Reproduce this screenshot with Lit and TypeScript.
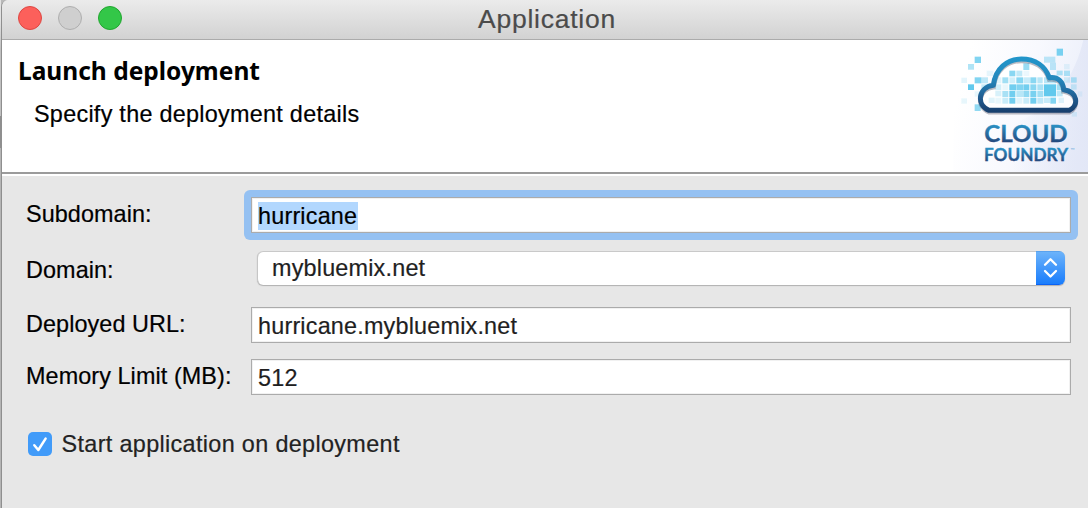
import { LitElement, html, svg, css } from "lit";
import { customElement, state } from "lit/decorators.js";

// Mosaic tiles of the logo: x, y, width, height, opacity
const TILES: number[][] = [
  [104, 62, 19, 19, 0.8], [84, 84, 18, 17, 0.5], [64, 125, 17, 16, 0.18], [104, 124, 20, 18, 0.8],
  [84, 145, 18, 17, 1], [124, 124, 20, 18, 0.4], [64, 187, 17, 16, 0.15], [104, 205, 18, 20, 0.7],
  [124, 145, 18, 17, 0.35], [140, 104, 20, 16, 0.15], [350, 38, 19, 21, 0.85], [312, 62, 34, 18, 0.4],
  [330, 80, 18, 22, 0.4], [372, 84, 17, 16, 0.15], [372, 104, 18, 16, 0.5], [393, 124, 17, 16, 0.5],
  [372, 124, 18, 16, 0.25], [393, 145, 17, 16, 0.3], [350, 104, 18, 14, 0.5], [413, 166, 14, 16, 0.12],
  [395, 228, 16, 14, 0.18], [104, 166, 16, 16, 0.15],
  [250, 82, 18, 20, 0.65], [208, 104, 18, 17, 0.75], [250, 104, 18, 16, 0.12], [229, 104, 18, 17, 0.4],
  [166, 124, 18, 18, 0.2], [187, 124, 18, 18, 0.6], [208, 124, 18, 18, 0.3], [229, 124, 20, 18, 0.75],
  [250, 124, 20, 18, 0.35], [271, 124, 18, 18, 0.75], [292, 124, 16, 18, 0.45], [312, 124, 36, 18, 0.45],
  [166, 145, 18, 18, 0.3], [187, 145, 18, 18, 0.15], [208, 145, 20, 18, 0.9], [229, 145, 20, 18, 0.8],
  [250, 145, 18, 18, 0.9], [271, 145, 18, 18, 0.75], [292, 145, 18, 18, 0.55], [312, 145, 36, 36, 1],
  [350, 145, 16, 18, 0.6], [166, 165, 18, 16, 0.25], [187, 165, 18, 18, 0.55], [208, 165, 18, 18, 0.9],
  [229, 165, 20, 18, 0.45], [250, 165, 18, 18, 0.7], [271, 165, 18, 18, 0.85], [292, 165, 18, 18, 0.6],
  [350, 165, 18, 16, 0.4], [146, 185, 18, 16, 0.2], [166, 185, 18, 18, 0.15], [187, 185, 18, 18, 0.35],
  [208, 185, 18, 18, 0.9], [229, 185, 18, 18, 0.2], [250, 185, 18, 18, 0.35], [271, 185, 18, 18, 0.9],
  [292, 185, 18, 18, 0.4], [312, 185, 18, 16, 0.35], [331, 185, 17, 18, 0.8], [356, 185, 16, 16, 0.2],
];

@customElement("cf-logo")
class CfLogo extends LitElement {
  static styles = css`
    :host { display: block; width: 148px; height: 132px; letter-spacing: 0; }
    .art { display: block; }
    .word { font-family: Lato, sans-serif; font-weight: 700; }
  `;
  render() {
    return html`<svg class="art" width="148" height="132" viewBox="0 12 444 396">
      <defs>
        <linearGradient id="bg" gradientUnits="userSpaceOnUse" x1="60" y1="150" x2="444" y2="250">
          <stop offset="0" stop-color="#fff"></stop>
          <stop offset="0.5" stop-color="#f8f9fe"></stop>
          <stop offset="1" stop-color="#eaeefa"></stop>
        </linearGradient>
        <linearGradient id="bg2" gradientUnits="userSpaceOnUse" x1="220" y1="0" x2="444" y2="0">
          <stop offset="0" stop-color="#dfe5f6" stop-opacity="0"></stop>
          <stop offset="1" stop-color="#dfe4f5"></stop>
        </linearGradient>
        <linearGradient id="edge" gradientUnits="userSpaceOnUse" x1="0" y1="60" x2="0" y2="232">
          <stop offset="0" stop-color="#2196cb"></stop>
          <stop offset="0.4" stop-color="#2488bd"></stop>
          <stop offset="0.72" stop-color="#215d91"></stop>
          <stop offset="1" stop-color="#173c6a"></stop>
        </linearGradient>
        <linearGradient id="w1" gradientUnits="userSpaceOnUse" x1="0" y1="268" x2="0" y2="320">
          <stop offset="0" stop-color="#2a8fc2"></stop>
          <stop offset="1" stop-color="#24477c"></stop>
        </linearGradient>
        <linearGradient id="w2" gradientUnits="userSpaceOnUse" x1="0" y1="338" x2="0" y2="376">
          <stop offset="0" stop-color="#2a8fc2"></stop>
          <stop offset="1" stop-color="#24477c"></stop>
        </linearGradient>
      </defs>
      <rect x="40" y="12" width="404" height="396" fill="url(#bg)"></rect>
      <path d="M444 12H430C418 62 400 110 360 165C320 215 260 250 200 270V408H444Z" fill="url(#bg2)" opacity="0.7"></path>
      <path d="M147 224C108 208 114 155 160 149C166 98 202 70 244 70C286 70 316 91 328 126C354 122 370 139 371 162C414 168 417 210 388 224Z" fill="#fff" opacity="0.85"></path>
      ${TILES.map(([x, y, w, h, o]) => svg`<rect x=${x} y=${y} width=${w} height=${h} fill="#62c9ed" opacity=${o}></rect>`)}
      <path d="M147 228C108 212 114 159 160 153C166 102 202 74 244 74C286 74 316 95 328 130C354 126 370 143 371 166C414 172 417 214 388 228Z" fill="none" stroke="#556" stroke-opacity="0.4" stroke-width="15"></path>
      <path d="M147 223C108 207 114 154 160 148C166 97 202 69 244 69C286 69 316 90 328 125C354 121 370 138 371 161C414 167 417 209 388 223Z" fill="none" stroke="url(#edge)" stroke-width="15" stroke-linejoin="round"></path>
      <text class="word" x="133" y="319" font-size="70" textLength="250" lengthAdjust="spacingAndGlyphs" fill="url(#w1)" stroke="url(#w1)" stroke-width="1">CLOUD</text>
      <text class="word" x="132" y="375" font-size="50" textLength="252" lengthAdjust="spacingAndGlyphs" fill="url(#w2)" stroke="url(#w2)" stroke-width="1">FOUNDRY</text>
      <text class="word" x="392" y="348" font-size="16" fill="#8dbce4">™</text>
    </svg>`;
  }
}

@customElement("app-root")
class AppRoot extends LitElement {
  @state() private started = true;

  static styles = css`
    * { box-sizing: border-box; }
    :host {
      display: flex; width: 1088px; height: 508px; overflow: hidden;
      background: #b9b9b9; color: #000;
      font: 23.4px/26px "Liberation Sans", Arial, sans-serif; letter-spacing: 0.19px;
      -webkit-text-stroke: 0.2px;
    }
    .strip { flex: none; width: 1px; background: linear-gradient(#e2e2e2 0 20px, #c0c0c0 50px 116px, #8f8f8f 116px 148px, #b5b5b5 148px); }
    .window {
      flex: 1; display: flex; flex-direction: column; overflow: hidden;
      border-left: 1px solid #8f8f8f; border-top-left-radius: 7px; background: #e7e7e7;
    }
    .bar {
      flex: none; height: 40px; display: grid; grid-template-columns: 1fr auto 1fr; align-items: center;
      padding: 0 0 3px 16px; background: linear-gradient(#ebebeb, #d2d2d2); border-bottom: 1px solid #ababab;
    }
    .lights { display: flex; gap: 16px; }
    .light { width: 24px; height: 24px; border-radius: 50%; border: 1px solid; }
    .close { background: #fc605b; border-color: #dd4742; }
    .min { background: #cfcfcf; border-color: #aeaeae; }
    .max { background: #33c748; border-color: #21a62f; }
    .title { font-size: 26.5px; letter-spacing: 0.75px; color: #4b4b4b; padding-right: 12px; padding-top: 1px; }
    .head { flex: none; height: 132px; display: flex; justify-content: space-between; background: #fff; }
    .texts { padding: 16px 0 0 16px; }
    .heading { margin: 0; font: 700 24.5px/30px "Noto Sans", sans-serif; letter-spacing: 0; -webkit-text-stroke: 0; }
    .sub { margin: 15px 0 0 16px; letter-spacing: 0.27px; }
    .rule { flex: none; height: 4px; background: #fff; border-top: 2px solid #9b9b9b; }
    .form { padding-top: 14px; }
    .row { display: flex; align-items: center; padding-left: 24px; }
    .label { width: 225px; letter-spacing: 0.08px; }
    .up { padding-bottom: 2px; }
    .down { padding-top: 4px; }
    .first { height: 50px; }
    .first .label { width: 218px; }
    .second { height: 34px; margin-top: 11px; }
    .second .label { width: 231px; }
    .third { height: 36px; margin-top: 22px; }
    .fourth { height: 36px; margin-top: 16px; }
    .field {
      width: 820px; height: 36px; border: 1px solid #ababab; background: #fff;
      box-shadow: inset 0 0 0 1px #f1f1f1; padding: 5px 0 0 6px; color: #1f1f1f;
    }
    .ring { background: #95c1f2; border-radius: 6px; padding: 7px; }
    .sel { display: block; width: 100px; height: 28px; line-height: 28px; background: #b2d7fe; color: #000; margin-top: -1px; }
    .select {
      width: 808px; height: 34px; border-radius: 6px; background: #fff; color: #1f1f1f; overflow: hidden;
      display: flex; justify-content: space-between; padding-left: 14px; line-height: 34px;
      border-left: 1px solid #c6c6c6; box-shadow: 0 1px 1px #b0b0b0, inset 0 1px #c9c9c9;
    }
    .step { width: 29px; height: 34px; background: linear-gradient(#6cb3fa, #1a7dfc); border-top: 1px solid #59a2ee; border-bottom: 1px solid #0b62f5; }
    .arrows { display: block; }
    .check { display: flex; align-items: center; height: 24px; margin-top: 37px; padding-left: 26px; color: #222; letter-spacing: 0.34px; }
    .box { display: flex; width: 24px; height: 24px; border-radius: 5px; background: #419bf9; margin-right: 9.5px; }
  `;

  render() {
    return html`
      <div class="strip"></div>
      <main class="window">
        <header class="bar">
          <div class="lights"><i class="light close"></i><i class="light min"></i><i class="light max"></i></div>
          <div class="title">Application</div>
        </header>
        <section class="head">
          <div class="texts">
            <h1 class="heading">Launch deployment</h1>
            <p class="sub">Specify the deployment details</p>
          </div>
          <cf-logo></cf-logo>
        </section>
        <div class="rule"></div>
        <section class="form">
          <div class="row first"><div class="label up">Subdomain:</div>
            <div class="ring"><div class="field"><span class="sel">hurricane</span></div></div></div>
          <div class="row second"><div class="label down">Domain:</div>
            <div class="select"><span>mybluemix.net</span>
              <span class="step"><svg class="arrows" width="29" height="32" viewBox="0 0 29 32" fill="none" stroke="#fff" stroke-width="2.3" stroke-linecap="round" stroke-linejoin="round"><path d="M9 12.8L14.5 7.3L20 12.8M9 19L14.5 24.5L20 19"></path></svg></span>
            </div></div>
          <div class="row third"><div class="label up">Deployed URL:</div><div class="field">hurricane.mybluemix.net</div></div>
          <div class="row fourth"><div class="label up">Memory Limit (MB):</div><div class="field">512</div></div>
          <div class="check" @click=${() => (this.started = !this.started)}>
            <span class="box">${this.started ? html`<svg width="24" height="24" viewBox="0 0 24 24" fill="none" stroke="#fff" stroke-width="2.5" stroke-linecap="round" stroke-linejoin="round"><path d="M6.3 13.3L10.3 18L17.6 6.6"></path></svg>` : ""}</span>
            <span>Start application on deployment</span>
          </div>
        </section>
      </main>`;
  }
}
